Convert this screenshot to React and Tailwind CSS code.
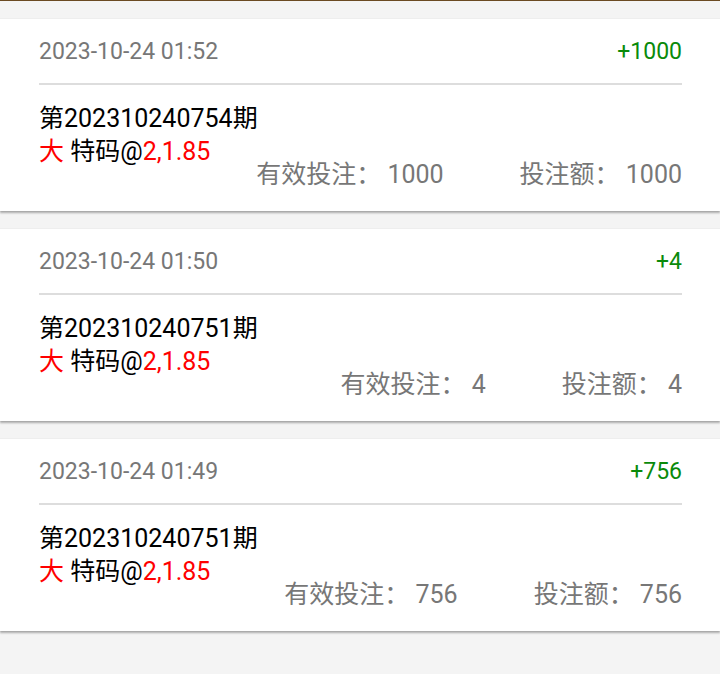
const records = [
  { time: "2023-10-24 01:52", win: "+1000", issue: "202310240754", valid: "1000", amount: "1000" },
  { time: "2023-10-24 01:50", win: "+4", issue: "202310240751", valid: "4", amount: "4" },
  { time: "2023-10-24 01:49", win: "+756", issue: "202310240751", valid: "756", amount: "756" },
];

const FONT = "font-['Roboto','Noto_Sans_CJK_SC',sans-serif]";

const RecordCard = ({ item }) => {
  return (
    <div className="h-[192px] bg-white pl-[39px] pr-[38px] shadow-[0_2px_2px_rgba(0,0,0,0.3),0_0_1px_rgba(0,0,0,0.15)]">
      <div className="h-[64px] pt-[2px] flex items-center justify-between text-[23px]">
        <span className="text-[#777777]">{item.time}</span>
        <span className="text-[#0a8a0a]">{item.win}</span>
      </div>

      <div className="h-[2px] bg-[#dddddd]" />

      <div className="mt-[17px] text-[25px] leading-[33px] text-black">
        <div>第{item.issue}期</div>
        <div>
          <span className="text-[#ff0000]">大</span> 特码@
          <span className="text-[#ff0000]">2,1.85</span>
        </div>
        <div className="-mt-[10px] flex justify-end gap-[76px] text-[#777777]">
          <span>有效投注： {item.valid}</span>
          <span>投注额： {item.amount}</span>
        </div>
      </div>
    </div>
  );
};

const App = () => {
  return (
    <div className={`min-h-[674px] bg-[#f4f4f4] border-t border-[#6b4a22] ${FONT}`}>
      <div className="pt-[18px] flex flex-col gap-[18px]">
        {records.map((item, i) => (
          <RecordCard key={i} item={item} />
        ))}
      </div>
    </div>
  );
};

export default App;
